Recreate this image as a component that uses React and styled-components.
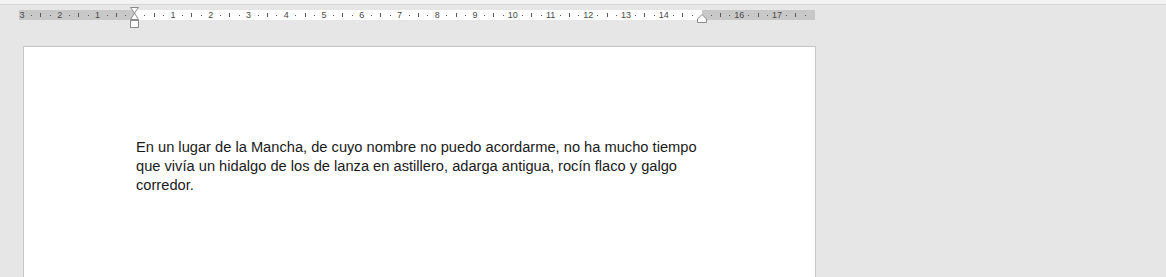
import React from 'react';
import styled, { createGlobalStyle } from 'styled-components';

const CM = 37.795;
const ORIGIN = 115.7; // ruler x of the left margin
const SLOT = CM / 4;

const GlobalStyle = createGlobalStyle`
  html, body {
    margin: 0;
    padding: 0;
    background: #e6e6e6;
    overflow: hidden;
    font-family: "Liberation Sans", Arial, sans-serif;
  }
`;

const Screen = styled.div`
  display: flex;
  flex-direction: column;
  width: 1166px;
  height: 277px;
  overflow: hidden;
  background: #e6e6e6;
`;

const TopStrip = styled.div`
  flex: none;
  height: 4px;
  background: #f3f3f3;
  border-bottom: 1px solid #d6d6d6;
`;

const Ruler = styled.div`
  position: relative;
  flex: none;
  display: flex;
  margin: 5px 0 0 19px;
  width: 796px;
  height: 10px;
`;

const Zone = styled.div`
  width: ${p => p.$w}px;
  height: 100%;
  background: ${p => (p.$margin ? '#c8c8c8' : '#ffffff')};
`;

/* scale laid over the zones: one cell per centimetre, four slots per cell */
const Scale = styled.div`
  position: absolute;
  inset: 0 0 0 ${ORIGIN - 3 * CM - SLOT / 2 + 0.8}px;
  display: flex;
  overflow: hidden;
`;

const Cell = styled.div`
  flex: none;
  display: grid;
  grid-template-columns: repeat(4, ${SLOT}px);
  align-items: center;
  justify-items: center;
  height: 10px;
`;

const Num = styled.span`
  font-size: 9px;
  line-height: 10px;
  color: #4a4a4a;
  white-space: nowrap;
`;

const Dot = styled.span`
  width: 1px;
  height: 1px;
  background: #5a5a5a;
`;

const Tick = styled.span`
  width: 1px;
  height: 4px;
  background: #5a5a5a;
`;

const IndentMarker = styled.svg`
  position: absolute;
  top: ${p => p.$top}px;
  left: ${p => p.$left}px;
  overflow: visible;
`;

const Page = styled.div`
  flex: none;
  margin: 26px 0 0 23px;
  width: 793px;
  height: 400px;
  background: #fff;
  border: 1px solid #c6c6c6;
  padding: 91px 0 0 112px;
  box-sizing: border-box;
`;

const Paragraph = styled.p`
  margin: 0;
  width: 567px;
  font-size: 14.67px;
  line-height: 19.2px;
  color: #1a1a1a;
`;

const centimetres = Array.from({ length: 21 }, (_, i) => i - 3);

function RulerScale() {
  return (
    <Scale>
      {centimetres.map(c => (
        <Cell key={c}>
          {c === 0 || c === 15 ? <span /> : <Num>{Math.abs(c)}</Num>}
          <Dot />
          <Tick />
          <Dot />
        </Cell>
      ))}
    </Scale>
  );
}

export default function App() {
  const rightMargin = ORIGIN + 15 * CM;
  return (
    <Screen>
      <GlobalStyle />
      <TopStrip />
      <Ruler>
        <Zone $margin $w={ORIGIN} />
        <Zone $w={rightMargin - ORIGIN} />
        <Zone $margin $w={796 - rightMargin} />
        <RulerScale />
        <IndentMarker $top={-3} $left={ORIGIN - 4.5} width="9" height="21" viewBox="0 0 9 21">
          <path d="M0.5 0.5 H8.5 L4.5 6 Z" fill="#fff" stroke="#8a8a8a" />
          <path d="M4.5 6 L8.5 12.5 H0.5 Z" fill="#fff" stroke="#8a8a8a" />
          <rect x="0.5" y="13.5" width="8" height="7" fill="#fff" stroke="#8a8a8a" />
        </IndentMarker>
        <IndentMarker $top={4} $left={rightMargin - 4.5} width="10" height="9" viewBox="0 0 10 9">
          <path d="M5 0.5 L9.5 5 V8.5 H0.5 V5 Z" fill="#fff" stroke="#8a8a8a" />
        </IndentMarker>
      </Ruler>
      <Page>
        <Paragraph>
          En un lugar de la Mancha, de cuyo nombre no puedo acordarme, no ha mucho tiempo que
          vivía un hidalgo de los de lanza en astillero, adarga antigua, rocín flaco y galgo
          corredor.
        </Paragraph>
      </Page>
    </Screen>
  );
}
